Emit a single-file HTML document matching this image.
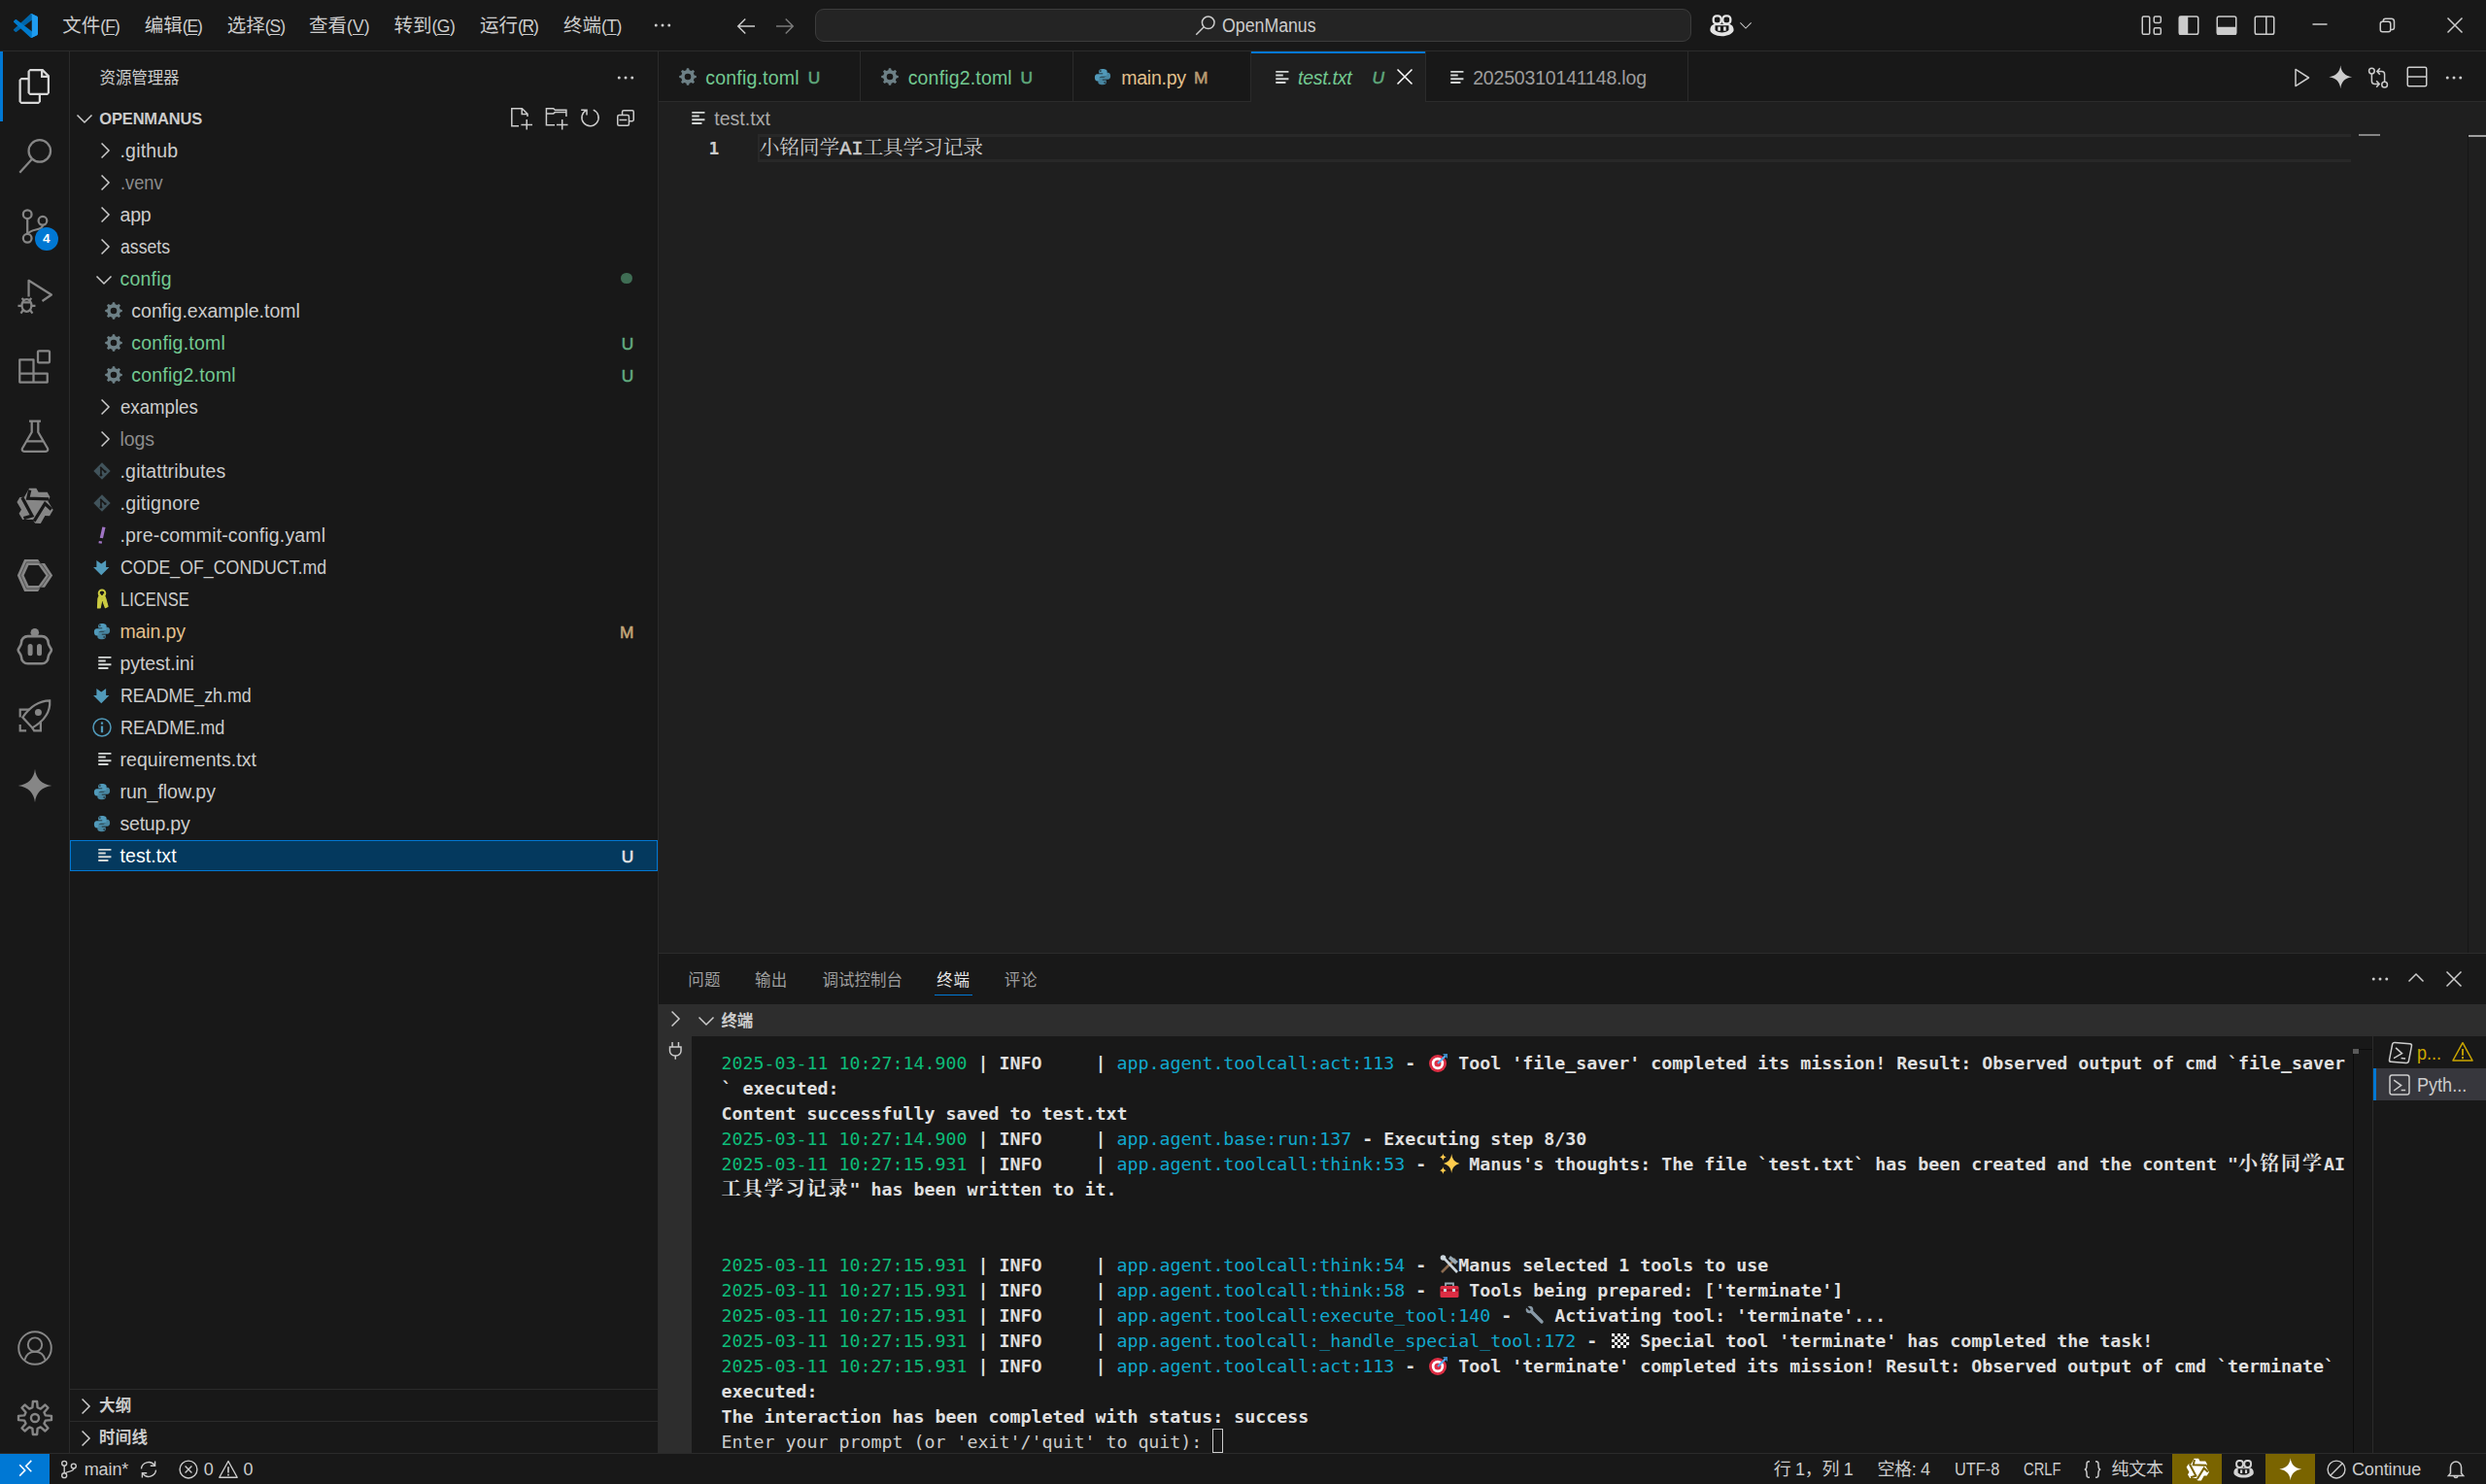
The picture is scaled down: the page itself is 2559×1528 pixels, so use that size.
<!DOCTYPE html><html lang="zh-CN"><head><meta charset="utf-8"><title>test.txt - OpenManus - Visual Studio Code</title><style>
html,body{margin:0;padding:0}
body{width:2559px;height:1528px;overflow:hidden;position:relative;background:#181818;font-family:'Liberation Sans','Noto Sans CJK SC',sans-serif;}
.a{position:absolute;display:block}
svg{overflow:visible}
.t{white-space:pre}
u{text-decoration:underline;text-underline-offset:2px;text-decoration-thickness:1px}
.term{font-family:'DejaVu Sans Mono','Noto Serif CJK SC',monospace;font-size:18.270px;line-height:26px;height:26px;white-space:pre;color:#e0e0e0;font-weight:700}
.term svg{display:inline-block}
.cj{font-size:20px;letter-spacing:2px;line-height:1px}
</style></head><body><div class="a" style="left:0px;top:52px;width:2559px;height:1px;background:#2b2b2b;"></div>
<svg class="a" style="left:13.500px;top:13.500px" width="25" height="25" viewBox="0 0 100 100"><path d="M96.461 10.796L75.857.876C73.472-.273 70.622.212 68.750 2.083L1.299 63.583c-1.815 1.654-1.813 4.511.004 6.162l5.510 5.009c1.485 1.350 3.722 1.450 5.321.237L93.361 13.370c2.725-2.067 6.639-.124 6.639 3.297v-.240c0-2.401-1.375-4.590-3.539-5.631z" fill="#0065a9"/><path d="M96.461 89.204L75.857 99.125c-2.385 1.148-5.235.663-7.107-1.208L1.299 36.417c-1.815-1.654-1.813-4.511.004-6.162l5.510-5.009c1.485-1.350 3.722-1.450 5.321-.237L93.361 86.630c2.725 2.067 6.639.124 6.639-3.297v.240c0 2.401-1.375 4.590-3.539 5.631z" fill="#007acc"/><path d="M75.858 99.126c-2.386 1.148-5.236.662-7.108-1.210C71.056 100.223 75 98.590 75 95.328V4.672c0-3.262-3.944-4.895-6.250-2.589C70.622.211 73.472-.274 75.858.874l20.601 9.907C98.623 11.822 100 14.011 100 16.413v67.174c0 2.402-1.377 4.592-3.541 5.633L75.858 99.126z" fill="#1f9cf0"/></svg>
<span class="a t" id="t2" style="top:12.50px;line-height:27px;font-size:19.5px;color:#cccccc;left:64.20px;">文件<span class="t" id="t1" style="font-size:17.500px;letter-spacing:-0.880px;">(<u>F</u>)</span></span>
<span class="a t" id="t4" style="top:12.50px;line-height:27px;font-size:19.5px;color:#cccccc;left:148.70px;">编辑<span class="t" id="t3" style="font-size:17.500px;letter-spacing:-1.122px;">(<u>E</u>)</span></span>
<span class="a t" id="t6" style="top:12.50px;line-height:27px;font-size:19.5px;color:#cccccc;left:233.70px;">选择<span class="t" id="t5" style="font-size:17.500px;letter-spacing:-0.972px;">(<u>S</u>)</span></span>
<span class="a t" id="t8" style="top:12.50px;line-height:27px;font-size:19.5px;color:#cccccc;left:318.00px;">查看<span class="t" id="t7" style="font-size:17.500px;letter-spacing:0.078px;">(<u>V</u>)</span></span>
<span class="a t" id="t10" style="top:12.50px;line-height:27px;font-size:19.5px;color:#cccccc;left:405.50px;">转到<span class="t" id="t9" style="font-size:17.500px;letter-spacing:-0.491px;">(<u>G</u>)</span></span>
<span class="a t" id="t12" style="top:12.50px;line-height:27px;font-size:19.5px;color:#cccccc;left:494.00px;">运行<span class="t" id="t11" style="font-size:17.500px;letter-spacing:-1.248px;">(<u>R</u>)</span></span>
<span class="a t" id="t14" style="top:12.50px;line-height:27px;font-size:19.5px;color:#cccccc;left:580.00px;">终端<span class="t" id="t13" style="font-size:17.500px;letter-spacing:-0.480px;">(<u>T</u>)</span></span>
<svg class="a" style="left:669.70px;top:14.00px;color:#cccccc;" width="24" height="24" viewBox="0 0 16 16" fill="none" stroke="currentColor" stroke-width="1" stroke-linecap="butt" stroke-linejoin="miter"><g fill="currentColor" stroke="none"><circle cx="3.5" cy="8" r="1"/><circle cx="8" cy="8" r="1"/><circle cx="12.5" cy="8" r="1"/></g></svg>
<svg class="a" style="left:756.30px;top:15.00px;color:#cccccc;" width="24" height="24" viewBox="0 0 16 16" fill="none" stroke="currentColor" stroke-width="1" stroke-linecap="butt" stroke-linejoin="miter"><path d="M7.5 3 L2.5 8 L7.5 13 M2.5 8 H14"/></svg>
<svg class="a" style="left:795.70px;top:15.00px;color:#7a7a7a;" width="24" height="24" viewBox="0 0 16 16" fill="none" stroke="currentColor" stroke-width="1" stroke-linecap="butt" stroke-linejoin="miter"><path d="M8.5 3 L13.5 8 L8.5 13 M13.5 8 H2"/></svg>
<div class="a" style="left:839px;top:8.5px;width:902px;height:34.5px;background:#242424;box-sizing:border-box;border:1px solid #3c3c3c;border-radius:9px;"></div>
<svg class="a" style="left:1228.50px;top:13.50px;color:#cccccc;" width="24" height="24" viewBox="0 0 16 16" fill="none" stroke="currentColor" stroke-width="1" stroke-linecap="butt" stroke-linejoin="miter"><circle cx="9.8" cy="6.2" r="4.2"/><path d="M6.8 9.2 L1.5 14.5"/></svg>
<span class="a t" id="t15" style="top:12.50px;line-height:27px;font-size:19.5px;color:#cccccc;left:1258.40px;transform:scaleX(0.9093);transform-origin:left center;">OpenManus</span>
<svg class="a" style="left:1760px;top:14px;color:#e4e4e4" width="26" height="24" viewBox="0 0 26 24"><g fill="none" stroke="currentColor" stroke-width="2.300"><rect x="3.700" y="2.300" width="8" height="8.200" rx="3.300"/><rect x="13.300" y="2.300" width="8" height="8.200" rx="3.300"/></g><path d="M.400 17C.400 13 2.500 11.500 5 10.800H20c2.500.700 4.600 2.200 4.600 6.200 0 3-5.600 6.200-12.100 6.200S.400 20 .400 17zM5.500 12.200V17c2.100 2 5 2.400 7 2.400s4.900-.400 7-2.400V12.200z" fill="currentColor" fill-rule="evenodd" stroke="none"/><rect x="8.300" y="13.500" width="2.600" height="4.200" fill="currentColor" stroke="none"/><rect x="14.100" y="13.500" width="2.600" height="4.200" fill="currentColor" stroke="none"/></svg>
<svg class="a" style="left:1787.50px;top:16.80px;color:#cccccc;stroke-width:.9" width="18" height="18" viewBox="0 0 16 16" fill="none" stroke="currentColor" stroke-width="1" stroke-linecap="butt" stroke-linejoin="miter"><path d="M3 5.7 L8 10.7 L13 5.7"/></svg>
<svg class="a" style="left:2203.00px;top:14.00px;color:#cccccc;" width="24" height="24" viewBox="0 0 16 16" fill="none" stroke="currentColor" stroke-width="1" stroke-linecap="butt" stroke-linejoin="miter"><rect x="1.500" y="2" width="5" height="12.200" rx=".900"/><rect x="9.500" y="2" width="4.700" height="4.300" rx=".900"/><rect x="9.500" y="9.900" width="4.700" height="4.300" rx=".900"/></svg>
<svg class="a" style="left:2241.00px;top:14.00px;color:#cccccc;" width="24" height="24" viewBox="0 0 16 16" fill="none" stroke="currentColor" stroke-width="1" stroke-linecap="butt" stroke-linejoin="miter"><rect x="1.500" y="2" width="13" height="12.200" rx="1.200"/><path d="M1.800 2.300h5.200v11.600H1.800z" fill="currentColor"/></svg>
<svg class="a" style="left:2280.00px;top:14.00px;color:#cccccc;" width="24" height="24" viewBox="0 0 16 16" fill="none" stroke="currentColor" stroke-width="1" stroke-linecap="butt" stroke-linejoin="miter"><rect x="1.500" y="2" width="13" height="12.200" rx="1.200"/><path d="M1.800 9.600h12.400v4.300H1.800z" fill="currentColor"/></svg>
<svg class="a" style="left:2319.00px;top:14.00px;color:#cccccc;" width="24" height="24" viewBox="0 0 16 16" fill="none" stroke="currentColor" stroke-width="1" stroke-linecap="butt" stroke-linejoin="miter"><rect x="1.500" y="2" width="13" height="12.200" rx="1.200"/><path d="M9.200 2v12.200"/></svg>
<svg class="a" style="left:2376.30px;top:13.00px;color:#cccccc;" width="24" height="24" viewBox="0 0 16 16" fill="none" stroke="currentColor" stroke-width="1" stroke-linecap="butt" stroke-linejoin="miter"><path d="M3 8H13"/></svg>
<svg class="a" style="left:2444.50px;top:14.00px;color:#cccccc;" width="24" height="24" viewBox="0 0 16 16" fill="none" stroke="currentColor" stroke-width="1" stroke-linecap="butt" stroke-linejoin="miter"><rect x="3.500" y="5.500" width="7" height="7" rx="1.500"/><path d="M5.500 5.500v-.5a1.500 1.500 0 0 1 1.500-1.500h4a2 2 0 0 1 2 2v4a1.500 1.500 0 0 1-1.500 1.500h-.8"/></svg>
<svg class="a" style="left:2514.50px;top:14.00px;color:#cccccc;" width="24" height="24" viewBox="0 0 16 16" fill="none" stroke="currentColor" stroke-width="1" stroke-linecap="butt" stroke-linejoin="miter"><path d="M3 3 L13 13 M13 3 L3 13"/></svg>
<div class="a" style="left:71px;top:53px;width:1px;height:1443px;background:#2b2b2b;"></div>
<div class="a" style="left:0px;top:53px;width:3px;height:72px;background:#0078d4;"></div>
<svg class="a" style="left:18px;top:71px;color:#d7d7d7" width="36" height="36" viewBox="0 0 24 24" fill="none" stroke="currentColor" stroke-width="1.5" stroke-linejoin="round"><path d="M17.500 0h-9L7 1.500V6H2.500L1 7.500v15.070L2.500 24h12.070L16 22.570V18h4.700l1.300-1.430V4.500L17.500 0zm0 2.120l2.380 2.380H17.500V2.120zm-3 20.380h-12v-15H7v9.070L8.500 18h6v4.500zm6-6h-12v-15H16V6h4.500v10.500z" fill="currentColor" stroke="none"/></svg>
<svg class="a" style="left:18px;top:143px;color:#868686" width="36" height="36" viewBox="0 0 24 24" fill="none" stroke="currentColor" stroke-width="1.5" stroke-linejoin="round"><circle cx="15.200" cy="8.300" r="7.500"/><path d="M10 13.800L1.500 23.200"/></svg>
<svg class="a" style="left:18px;top:215px;color:#868686" width="36" height="36" viewBox="0 0 24 24" fill="none" stroke="currentColor" stroke-width="1.5" stroke-linejoin="round"><circle cx="6.800" cy="3.800" r="2.900"/><circle cx="6.800" cy="20.200" r="2.900"/><circle cx="17.300" cy="8.200" r="2.900"/><path d="M6.800 6.700v10.600M17.300 11.100c0 4.400-8.500 2-10.300 6.400"/></svg>
<div class="a" style="left:35.700px;top:234px;width:24px;height:24px;border-radius:12px;background:#0078d4;color:#fff;font-size:13.500px;font-weight:700;line-height:24px;text-align:center">4</div>
<svg class="a" style="left:18px;top:287px;color:#868686" width="36" height="36" viewBox="0 0 24 24" fill="none" stroke="currentColor" stroke-width="1.5" stroke-linejoin="round"><path d="M7.700 12.300V1.200L23.300 11 17 15.300"/><ellipse cx="6.300" cy="18.300" rx="3.300" ry="4.300"/><path d="M3 13.300l1.600 1.600M9.600 13.300L8 14.900M.3 18.500H3M9.600 18.500h2.700M2.300 23.700l1.600-2.200M10.300 23.700l-1.600-2.200M3.300 16.300h6"/></svg>
<svg class="a" style="left:18px;top:359px;color:#868686" width="36" height="36" viewBox="0 0 24 24" fill="none" stroke="currentColor" stroke-width="1.5" stroke-linejoin="round"><path d="M1.500 7.500h9.500v9.500h9.500v6H1.500zM11 17v6M1.500 17H11"/><rect x="14" y="1.500" width="8" height="8" rx=".7"/></svg>
<svg class="a" style="left:18px;top:431px;color:#868686" width="36" height="36" viewBox="0 0 24 24" fill="none" stroke="currentColor" stroke-width="1.5" stroke-linejoin="round"><path d="M8 1.800h8M9.800 1.800v7.500L3.300 20.500c-.5 1 .2 2 1.300 2h14.800c1.100 0 1.800-1 1.300-2L14.200 9.300V1.800M6.300 15.500h11.400"/></svg>
<svg class="a" style="left:18px;top:503px;color:#868686" width="36" height="36" viewBox="0 0 36 36" fill="none"><path d="M12.09 -0.27L19.36 -0.27L21.64 3.82L30.73 3.82L33.45 8.82L31.36 12.91L36.70 21.88L33.06 28.18L28.38 28.10L23.84 35.98L18.15 35.84L15.65 31.98L5.21 32.12L1.57 25.82L3.98 21.81L-0.57 13.93L2.40 9.07L6.99 8.84Z" fill="currentColor" stroke="none"/><path d="M12.73 1.55L10.73 10.18L32.09 10.82M34.81 21.52L28.33 15.47L17.10 33.66M6.47 30.66L14.94 28.07L4.81 9.25" stroke="#181818" stroke-width="3.300" fill="none" stroke-linejoin="miter"/></svg>
<svg class="a" style="left:18px;top:575px;color:#868686" width="36" height="36" viewBox="0 0 36 36" fill="none"><path d="M-0.18 17.45L7.09 0.91L21.18 0.91L23.64 5.00L28.00 5.00L36.18 17.45L28.00 29.73L23.64 29.73L21.18 34.09L7.09 34.09ZM6.64 17.45L11.45 7.00L21.82 7.00L29.36 17.45L21.82 28.00L11.45 28.00Z" fill="currentColor" fill-rule="evenodd" stroke="none"/><path d="M3.27 17.45L9.27 3.91L21.45 3.91L24.82 6.00L32.73 17.45L24.82 28.91L21.45 31.09L9.27 31.09Z" stroke="#181818" stroke-width=".500" fill="none"/></svg>
<svg class="a" style="left:18px;top:647.7px;color:#868686" width="36" height="36" viewBox="0 0 36 36" fill="none"><circle cx="17.800" cy="3.200" r="4.300" fill="currentColor"/><path d="M10.500 7.100H25.100a6.500 6.500 0 0 1 6.500 6.500c0 3.500 3.300 5.200 3.300 7.600s-3.300 4.100-3.300 7.600a6.500 6.500 0 0 1-6.500 6.500H10.500A6.500 6.500 0 0 1 4 28.800c0-3.500-3.300-5.200-3.300-7.600S4 17.100 4 13.600A6.500 6.500 0 0 1 10.500 7.100z" stroke="currentColor" stroke-width="2.600" stroke-linejoin="round"/><path d="M13.100 17.500v7.200M22.500 17.500v7.200" stroke="currentColor" stroke-width="5" stroke-linecap="round"/></svg>
<svg class="a" style="left:18px;top:719px;color:#868686" width="36" height="36" viewBox="0 0 36 36" fill="none"><g stroke="currentColor" stroke-width="2.200" fill="none" stroke-linejoin="miter"><path d="M33.200 2.400Q16.750 2.800 5.300 19.600L15.300 30.400Q34.500 19.200 33.200 2.400z"/><path d="M12.500 11.700H2.700V19.500M23.900 23.300V33.300H17.100L15.300 30.400M2.700 26.900V33.300H9.100"/></g><circle cx="21.400" cy="14.600" r="3.500" fill="currentColor"/></svg>
<svg class="a" style="left:18px;top:791px;color:#868686" width="36" height="36" viewBox="0 0 24 24" fill="none" stroke="currentColor" stroke-width="1.5" stroke-linejoin="round"><path d="M12 .5c.6 6.500 4.500 10.400 11.500 11.500-7 1.100-10.900 5-11.500 11.500C11.400 17 7.500 13.100.5 12 7.500 10.900 11.400 7 12 .5z" fill="currentColor" stroke="none"/></svg>
<svg class="a" style="left:18px;top:1370px;color:#868686" width="36" height="36" viewBox="0 0 24 24" fill="none" stroke="currentColor" stroke-width="1.3" stroke-linejoin="round"><circle cx="12" cy="12" r="11.200"/><circle cx="12" cy="9.700" r="4.800"/><path d="M4.800 20.500c1-4 3.800-6 7.200-6s6.200 2 7.200 6"/></svg>
<svg class="a" style="left:18px;top:1442px;color:#868686" width="36" height="36" viewBox="0 0 24 24" fill="none" stroke="currentColor" stroke-width="1.5" stroke-linejoin="round"><path d="M23.31 10.57 L23.31 13.43 L19.20 13.73 L18.31 15.87 L21.01 18.99 L18.99 21.01 L15.87 18.31 L13.73 19.20 L13.43 23.31 L10.57 23.31 L10.27 19.20 L8.13 18.31 L5.01 21.01 L2.99 18.99 L5.69 15.87 L4.80 13.73 L0.69 13.43 L0.69 10.57 L4.80 10.27 L5.69 8.13 L2.99 5.01 L5.01 2.99 L8.13 5.69 L10.27 4.80 L10.57 0.69 L13.43 0.69 L13.73 4.80 L15.87 5.69 L18.99 2.99 L21.01 5.01 L18.31 8.13 L19.20 10.27Z" stroke-width="1.600"/><circle cx="12" cy="12" r="2.700" stroke-width="1.600"/></svg>
<div class="a" style="left:677px;top:53px;width:1px;height:1443px;background:#2b2b2b;"></div>
<span class="a t" id="t16" style="top:68.50px;line-height:23px;font-size:16.5px;color:#cccccc;left:102.60px;letter-spacing:-0.150px;">资源管理器</span>
<svg class="a" style="left:632.00px;top:67.50px;color:#cccccc;" width="24" height="24" viewBox="0 0 16 16" fill="none" stroke="currentColor" stroke-width="1" stroke-linecap="butt" stroke-linejoin="miter"><g fill="currentColor" stroke="none"><circle cx="3.5" cy="8" r="1"/><circle cx="8" cy="8" r="1"/><circle cx="12.5" cy="8" r="1"/></g></svg>
<svg class="a" style="left:75.20px;top:110.00px;color:#cccccc;" width="24" height="24" viewBox="0 0 16 16" fill="none" stroke="currentColor" stroke-width="1" stroke-linecap="butt" stroke-linejoin="miter"><path d="M3 5.7 L8 10.7 L13 5.7"/></svg>
<span class="a t" id="t17" style="top:110.50px;line-height:23px;font-size:16.5px;color:#cccccc;left:102.30px;font-weight:700;letter-spacing:-0.171px;">OPENMANUS</span>
<svg class="a" style="left:525.00px;top:109.90px;color:#cccccc;" width="24" height="24" viewBox="0 0 24 24" fill="none" stroke="currentColor" stroke-width="1" stroke-linecap="butt" stroke-linejoin="miter"><g stroke-width="1.500"><path d="M9 19.700H1.800V1.700H12.400L18 7.300V10.100M12.200 1.700V7.500H18M11.400 18.500H23M17.200 13V23.600"/></g></svg>
<svg class="a" style="left:560.50px;top:109.90px;color:#cccccc;" width="24" height="24" viewBox="0 0 24 24" fill="none" stroke="currentColor" stroke-width="1" stroke-linecap="butt" stroke-linejoin="miter"><g stroke-width="1.500"><path d="M10 18.800H1.400V1.800H8.700L10.300 3.300H21.900V10.100M1.400 6.900H8.700L10.300 5.600H21.900M11.900 18.500H23.500M17.700 13V23.600"/></g></svg>
<svg class="a" style="left:595.00px;top:109.90px;color:#cccccc;" width="24" height="24" viewBox="0 0 24 24" fill="none" stroke="currentColor" stroke-width="1" stroke-linecap="butt" stroke-linejoin="miter"><g stroke-width="1.500"><path d="M8.870 3.310A8.600 8.600 0 1 0 15.720 3.130M3.200 3.300H9V8.500"/></g></svg>
<svg class="a" style="left:631.50px;top:109.90px;color:#cccccc;" width="24" height="24" viewBox="0 0 24 24" fill="none" stroke="currentColor" stroke-width="1" stroke-linecap="butt" stroke-linejoin="miter"><g stroke-width="1.500"><rect x="3.750" y="8.550" width="11.700" height="10.800" rx="1.500"/><path d="M5.500 13.600H13.300M8.550 8.500V5.250a1.500 1.500 0 0 1 1.500-1.500H18.750a1.500 1.500 0 0 1 1.500 1.500V13.250a1.500 1.500 0 0 1-1.500 1.500H15.500"/></g></svg>
<svg class="a" style="left:95.70px;top:143.00px;color:#cccccc;" width="24" height="24" viewBox="0 0 16 16" fill="none" stroke="currentColor" stroke-width="1" stroke-linecap="butt" stroke-linejoin="miter"><path d="M5.7 3 L10.7 8 L5.7 13"/></svg>
<span class="a t" id="t18" style="top:141.50px;line-height:27px;font-size:19.5px;color:#cccccc;left:123.50px;letter-spacing:0.190px;">.github</span>
<svg class="a" style="left:95.70px;top:176.00px;color:#cccccc;" width="24" height="24" viewBox="0 0 16 16" fill="none" stroke="currentColor" stroke-width="1" stroke-linecap="butt" stroke-linejoin="miter"><path d="M5.7 3 L10.7 8 L5.7 13"/></svg>
<span class="a t" id="t19" style="top:174.50px;line-height:27px;font-size:19.5px;color:#8c8c8c;left:123.50px;transform:scaleX(0.9354);transform-origin:left center;">.venv</span>
<svg class="a" style="left:95.70px;top:209.00px;color:#cccccc;" width="24" height="24" viewBox="0 0 16 16" fill="none" stroke="currentColor" stroke-width="1" stroke-linecap="butt" stroke-linejoin="miter"><path d="M5.7 3 L10.7 8 L5.7 13"/></svg>
<span class="a t" id="t20" style="top:207.50px;line-height:27px;font-size:19.5px;color:#cccccc;left:123.50px;letter-spacing:-0.173px;">app</span>
<svg class="a" style="left:95.70px;top:242.00px;color:#cccccc;" width="24" height="24" viewBox="0 0 16 16" fill="none" stroke="currentColor" stroke-width="1" stroke-linecap="butt" stroke-linejoin="miter"><path d="M5.7 3 L10.7 8 L5.7 13"/></svg>
<span class="a t" id="t21" style="top:240.50px;line-height:27px;font-size:19.5px;color:#cccccc;left:123.50px;transform:scaleX(0.9067);transform-origin:left center;">assets</span>
<svg class="a" style="left:95.00px;top:275.50px;color:#cccccc;" width="24" height="24" viewBox="0 0 16 16" fill="none" stroke="currentColor" stroke-width="1" stroke-linecap="butt" stroke-linejoin="miter"><path d="M3 5.7 L8 10.7 L13 5.7"/></svg>
<span class="a t" id="t22" style="top:273.50px;line-height:27px;font-size:19.5px;color:#73c991;left:123.50px;letter-spacing:0.211px;">config</span>
<div class="a" style="left:639.3px;top:280.6px;width:11.8px;height:11.8px;background:#3f6d54;border-radius:50%;"></div>
<svg class="a" style="left:104.50px;top:307.50px;color:#6d8086;" width="24" height="24" viewBox="0 0 16 16" fill="none" stroke="currentColor" stroke-width="1" stroke-linecap="butt" stroke-linejoin="miter"><path d="M13.85 7.26 L13.85 8.74 L12.47 9.07 L11.92 10.40 L12.66 11.62 L11.62 12.66 L10.40 11.92 L9.07 12.47 L8.74 13.85 L7.26 13.85 L6.93 12.47 L5.60 11.92 L4.38 12.66 L3.34 11.62 L4.08 10.40 L3.53 9.07 L2.15 8.74 L2.15 7.26 L3.53 6.93 L4.08 5.60 L3.34 4.38 L4.38 3.34 L5.60 4.08 L6.93 3.53 L7.26 2.15 L8.74 2.15 L9.07 3.53 L10.40 4.08 L11.62 3.34 L12.66 4.38 L11.92 5.60 L12.47 6.93Z M8 5.800a2.200 2.200 0 1 0 0 4.400a2.200 2.200 0 1 0 0-4.400z" fill="currentColor" fill-rule="evenodd" stroke="none"/></svg>
<span class="a t" id="t23" style="top:306.50px;line-height:27px;font-size:19.5px;color:#cccccc;left:135.30px;letter-spacing:0.010px;">config.example.toml</span>
<svg class="a" style="left:104.50px;top:340.50px;color:#6d8086;" width="24" height="24" viewBox="0 0 16 16" fill="none" stroke="currentColor" stroke-width="1" stroke-linecap="butt" stroke-linejoin="miter"><path d="M13.85 7.26 L13.85 8.74 L12.47 9.07 L11.92 10.40 L12.66 11.62 L11.62 12.66 L10.40 11.92 L9.07 12.47 L8.74 13.85 L7.26 13.85 L6.93 12.47 L5.60 11.92 L4.38 12.66 L3.34 11.62 L4.08 10.40 L3.53 9.07 L2.15 8.74 L2.15 7.26 L3.53 6.93 L4.08 5.60 L3.34 4.38 L4.38 3.34 L5.60 4.08 L6.93 3.53 L7.26 2.15 L8.74 2.15 L9.07 3.53 L10.40 4.08 L11.62 3.34 L12.66 4.38 L11.92 5.60 L12.47 6.93Z M8 5.800a2.200 2.200 0 1 0 0 4.400a2.200 2.200 0 1 0 0-4.400z" fill="currentColor" fill-rule="evenodd" stroke="none"/></svg>
<span class="a t" id="t24" style="top:339.50px;line-height:27px;font-size:19.5px;color:#73c991;left:135.30px;letter-spacing:0.220px;">config.toml</span>
<span class="a t" id="t25" style="top:341.80px;line-height:24px;font-size:17.3px;color:#62ad80;right:1906.70px;-webkit-text-stroke:.55px currentColor;">U</span>
<svg class="a" style="left:104.50px;top:373.50px;color:#6d8086;" width="24" height="24" viewBox="0 0 16 16" fill="none" stroke="currentColor" stroke-width="1" stroke-linecap="butt" stroke-linejoin="miter"><path d="M13.85 7.26 L13.85 8.74 L12.47 9.07 L11.92 10.40 L12.66 11.62 L11.62 12.66 L10.40 11.92 L9.07 12.47 L8.74 13.85 L7.26 13.85 L6.93 12.47 L5.60 11.92 L4.38 12.66 L3.34 11.62 L4.08 10.40 L3.53 9.07 L2.15 8.74 L2.15 7.26 L3.53 6.93 L4.08 5.60 L3.34 4.38 L4.38 3.34 L5.60 4.08 L6.93 3.53 L7.26 2.15 L8.74 2.15 L9.07 3.53 L10.40 4.08 L11.62 3.34 L12.66 4.38 L11.92 5.60 L12.47 6.93Z M8 5.800a2.200 2.200 0 1 0 0 4.400a2.200 2.200 0 1 0 0-4.400z" fill="currentColor" fill-rule="evenodd" stroke="none"/></svg>
<span class="a t" id="t26" style="top:372.50px;line-height:27px;font-size:19.5px;color:#73c991;left:135.30px;letter-spacing:0.205px;">config2.toml</span>
<span class="a t" id="t27" style="top:374.80px;line-height:24px;font-size:17.3px;color:#62ad80;right:1906.70px;-webkit-text-stroke:.55px currentColor;">U</span>
<svg class="a" style="left:95.70px;top:407.00px;color:#cccccc;" width="24" height="24" viewBox="0 0 16 16" fill="none" stroke="currentColor" stroke-width="1" stroke-linecap="butt" stroke-linejoin="miter"><path d="M5.7 3 L10.7 8 L5.7 13"/></svg>
<span class="a t" id="t28" style="top:405.50px;line-height:27px;font-size:19.5px;color:#cccccc;left:123.50px;transform:scaleX(0.9560);transform-origin:left center;">examples</span>
<svg class="a" style="left:95.70px;top:440.00px;color:#cccccc;" width="24" height="24" viewBox="0 0 16 16" fill="none" stroke="currentColor" stroke-width="1" stroke-linecap="butt" stroke-linejoin="miter"><path d="M5.7 3 L10.7 8 L5.7 13"/></svg>
<span class="a t" id="t29" style="top:438.50px;line-height:27px;font-size:19.5px;color:#8c8c8c;left:123.50px;letter-spacing:-0.060px;">logs</span>
<svg class="a" style="left:92.50px;top:472.50px;color:#41535b;" width="24" height="24" viewBox="0 0 16 16" fill="none" stroke="currentColor" stroke-width="1" stroke-linecap="butt" stroke-linejoin="miter"><path d="M8 2.200L13.800 8 8 13.800 2.200 8z" fill="currentColor" stroke="none"/><path d="M6.800 5.200l3.200 3.200M7.300 5.500v5.300" stroke="#181818" stroke-width="1.100"/><circle cx="10.200" cy="8.500" r=".9" fill="#181818" stroke="none"/><circle cx="7.300" cy="10.800" r=".9" fill="#181818" stroke="none"/></svg>
<span class="a t" id="t30" style="top:471.50px;line-height:27px;font-size:19.5px;color:#cccccc;left:123.50px;letter-spacing:0.197px;">.gitattributes</span>
<svg class="a" style="left:92.50px;top:505.50px;color:#41535b;" width="24" height="24" viewBox="0 0 16 16" fill="none" stroke="currentColor" stroke-width="1" stroke-linecap="butt" stroke-linejoin="miter"><path d="M8 2.200L13.800 8 8 13.800 2.200 8z" fill="currentColor" stroke="none"/><path d="M6.800 5.200l3.200 3.200M7.300 5.500v5.300" stroke="#181818" stroke-width="1.100"/><circle cx="10.200" cy="8.500" r=".9" fill="#181818" stroke="none"/><circle cx="7.300" cy="10.800" r=".9" fill="#181818" stroke="none"/></svg>
<span class="a t" id="t31" style="top:504.50px;line-height:27px;font-size:19.5px;color:#cccccc;left:123.50px;letter-spacing:0.242px;">.gitignore</span>
<svg class="a" style="left:92.50px;top:539.00px;color:#a074c4;" width="24" height="24" viewBox="0 0 16 16" fill="none" stroke="currentColor" stroke-width="1" stroke-linecap="butt" stroke-linejoin="miter"><path d="M9.300 2.500L7.600 10M7 12.200l-.3 1.500" stroke-width="2.200"/></svg>
<span class="a t" id="t32" style="top:537.50px;line-height:27px;font-size:19.5px;color:#cccccc;left:123.50px;letter-spacing:0.162px;">.pre-commit-config.yaml</span>
<svg class="a" style="left:94.25px;top:574.25px;color:#519aba;" width="20.5" height="20.5" viewBox="0 0 16 16" fill="none" stroke="currentColor" stroke-width="1" stroke-linecap="butt" stroke-linejoin="miter"><path d="M4.200 2.300l3.800 2.700 3.800-2.700v5.500h2.600L8 14.300 1.600 7.800h2.600z" fill="currentColor" stroke="none"/></svg>
<span class="a t" id="t33" style="top:570.50px;line-height:27px;font-size:19.5px;color:#cccccc;left:123.50px;transform:scaleX(0.9109);transform-origin:left center;">CODE_OF_CONDUCT.md</span>
<svg class="a" style="left:92.50px;top:604.50px;color:#cbcb41;" width="24" height="24" viewBox="0 0 16 16" fill="none" stroke="currentColor" stroke-width="1" stroke-linecap="butt" stroke-linejoin="miter"><circle cx="8" cy="3.800" r="2.200" stroke-width="1.300"/><path d="M6.600 4.500L5.300 7.500 5 14 6.800 14 7.600 10 8 7zM9.300 4.500l1.200 3 1.500 5.500-1.700.8-1.500-4L8 7z" fill="currentColor" stroke-width=".8" stroke-linejoin="round"/></svg>
<span class="a t" id="t34" style="top:603.50px;line-height:27px;font-size:19.5px;color:#cccccc;left:123.50px;transform:scaleX(0.8484);transform-origin:left center;">LICENSE</span>
<svg class="a" style="left:94.50px;top:639.50px;color:#519aba;" width="20" height="20" viewBox="0 0 16 16" fill="none" stroke="currentColor" stroke-width="1" stroke-linecap="butt" stroke-linejoin="miter"><path d="M7.900 1.500c-2.300 0-2.900 1-2.900 2v1.700h3.200v.6H3.600c-1.300 0-2.100 1-2.100 2.800s.8 2.900 2.100 2.900H5V9.700c0-1.100.9-2 2-2h3c.9 0 1.700-.7 1.700-1.700V3.500c0-1-.9-2-3.800-2zM6.300 2.600a.6.600 0 1 1 0 1.300.6.600 0 0 1 0-1.300z" fill="currentColor" stroke="none"/><path d="M8.100 14.500c2.300 0 2.900-1 2.900-2v-1.700H7.800v-.6h4.600c1.300 0 2.100-1 2.100-2.800s-.8-2.900-2.100-2.900H11v1.800c0 1.100-.9 2-2 2H6c-.9 0-1.700.7-1.700 1.700v2.500c0 1 .9 2 3.800 2zM9.700 13.400a.6.600 0 1 1 0-1.300.6.600 0 0 1 0 1.300z" fill="currentColor" stroke="none" opacity=".85"/></svg>
<span class="a t" id="t35" style="top:636.50px;line-height:27px;font-size:19.5px;color:#e2c08d;left:123.50px;letter-spacing:-0.147px;">main.py</span>
<span class="a t" id="t36" style="top:638.80px;line-height:24px;font-size:17.3px;color:#c2a679;right:1906.70px;-webkit-text-stroke:.55px currentColor;">M</span>
<svg class="a" style="left:92.50px;top:671.00px;color:#d4d7d6;" width="24" height="24" viewBox="0 0 16 16" fill="none" stroke="currentColor" stroke-width="1" stroke-linecap="butt" stroke-linejoin="miter"><path d="M5.500 3.900h8.800M5.500 6.350h5M5.500 8.800h8.800M5.500 11.300h6.800" stroke-width="1.300"/></svg>
<span class="a t" id="t37" style="top:669.50px;line-height:27px;font-size:19.5px;color:#cccccc;left:123.50px;letter-spacing:-0.061px;">pytest.ini</span>
<svg class="a" style="left:94.25px;top:706.25px;color:#519aba;" width="20.5" height="20.5" viewBox="0 0 16 16" fill="none" stroke="currentColor" stroke-width="1" stroke-linecap="butt" stroke-linejoin="miter"><path d="M4.200 2.300l3.800 2.700 3.800-2.700v5.500h2.600L8 14.300 1.600 7.800h2.600z" fill="currentColor" stroke="none"/></svg>
<span class="a t" id="t38" style="top:702.50px;line-height:27px;font-size:19.5px;color:#cccccc;left:123.50px;transform:scaleX(0.9140);transform-origin:left center;">README_zh.md</span>
<svg class="a" style="left:92.50px;top:737.00px;color:#519aba;" width="24" height="24" viewBox="0 0 16 16" fill="none" stroke="currentColor" stroke-width="1" stroke-linecap="butt" stroke-linejoin="miter"><circle cx="8" cy="8" r="6"/><path d="M8 7v4.500M8 4.300v1.500" stroke-width="1.500"/></svg>
<span class="a t" id="t39" style="top:735.50px;line-height:27px;font-size:19.5px;color:#cccccc;left:123.50px;transform:scaleX(0.9264);transform-origin:left center;">README.md</span>
<svg class="a" style="left:92.50px;top:770.00px;color:#d4d7d6;" width="24" height="24" viewBox="0 0 16 16" fill="none" stroke="currentColor" stroke-width="1" stroke-linecap="butt" stroke-linejoin="miter"><path d="M5.500 3.900h8.800M5.500 6.350h5M5.500 8.800h8.800M5.500 11.300h6.800" stroke-width="1.300"/></svg>
<span class="a t" id="t40" style="top:768.50px;line-height:27px;font-size:19.5px;color:#cccccc;left:123.50px;letter-spacing:0.039px;">requirements.txt</span>
<svg class="a" style="left:94.50px;top:804.50px;color:#519aba;" width="20" height="20" viewBox="0 0 16 16" fill="none" stroke="currentColor" stroke-width="1" stroke-linecap="butt" stroke-linejoin="miter"><path d="M7.900 1.500c-2.300 0-2.900 1-2.900 2v1.700h3.200v.6H3.600c-1.300 0-2.100 1-2.100 2.800s.8 2.900 2.100 2.900H5V9.700c0-1.100.9-2 2-2h3c.9 0 1.700-.7 1.700-1.700V3.500c0-1-.9-2-3.800-2zM6.300 2.600a.6.600 0 1 1 0 1.300.6.600 0 0 1 0-1.300z" fill="currentColor" stroke="none"/><path d="M8.100 14.500c2.300 0 2.900-1 2.900-2v-1.700H7.800v-.6h4.600c1.300 0 2.100-1 2.100-2.800s-.8-2.900-2.100-2.900H11v1.800c0 1.100-.9 2-2 2H6c-.9 0-1.700.7-1.700 1.700v2.500c0 1 .9 2 3.800 2zM9.700 13.400a.6.600 0 1 1 0-1.300.6.600 0 0 1 0 1.300z" fill="currentColor" stroke="none" opacity=".85"/></svg>
<span class="a t" id="t41" style="top:801.50px;line-height:27px;font-size:19.5px;color:#cccccc;left:123.50px;letter-spacing:-0.026px;">run_flow.py</span>
<svg class="a" style="left:94.50px;top:837.50px;color:#519aba;" width="20" height="20" viewBox="0 0 16 16" fill="none" stroke="currentColor" stroke-width="1" stroke-linecap="butt" stroke-linejoin="miter"><path d="M7.900 1.500c-2.300 0-2.900 1-2.900 2v1.700h3.200v.6H3.600c-1.300 0-2.100 1-2.100 2.800s.8 2.900 2.100 2.900H5V9.700c0-1.100.9-2 2-2h3c.9 0 1.700-.7 1.700-1.700V3.500c0-1-.9-2-3.800-2zM6.300 2.600a.6.600 0 1 1 0 1.300.6.600 0 0 1 0-1.300z" fill="currentColor" stroke="none"/><path d="M8.100 14.500c2.300 0 2.900-1 2.900-2v-1.700H7.800v-.6h4.600c1.300 0 2.100-1 2.100-2.800s-.8-2.900-2.100-2.900H11v1.800c0 1.100-.9 2-2 2H6c-.9 0-1.700.7-1.700 1.700v2.500c0 1 .9 2 3.800 2zM9.700 13.400a.6.600 0 1 1 0-1.300.6.600 0 0 1 0 1.300z" fill="currentColor" stroke="none" opacity=".85"/></svg>
<span class="a t" id="t42" style="top:834.50px;line-height:27px;font-size:19.5px;color:#cccccc;left:123.50px;letter-spacing:-0.217px;">setup.py</span>
<div class="a" style="left:72px;top:864.5px;width:605px;height:32.5px;background:#04395e;box-sizing:border-box;border:1.500px solid #0078d4;"></div>
<svg class="a" style="left:92.50px;top:869.00px;color:#d4d7d6;" width="24" height="24" viewBox="0 0 16 16" fill="none" stroke="currentColor" stroke-width="1" stroke-linecap="butt" stroke-linejoin="miter"><path d="M5.500 3.900h8.800M5.500 6.350h5M5.500 8.800h8.800M5.500 11.300h6.800" stroke-width="1.300"/></svg>
<span class="a t" id="t43" style="top:867.50px;line-height:27px;font-size:19.5px;color:#ffffff;left:123.50px;letter-spacing:0.095px;">test.txt</span>
<span class="a t" id="t44" style="top:869.80px;line-height:24px;font-size:17.3px;color:#e6e6e6;right:1906.70px;-webkit-text-stroke:.55px currentColor;">U</span>
<div class="a" style="left:72px;top:1430px;width:605px;height:1px;background:#2b2b2b;"></div>
<div class="a" style="left:72px;top:1463px;width:605px;height:1px;background:#2b2b2b;"></div>
<svg class="a" style="left:76.00px;top:1435.50px;color:#cccccc;" width="24" height="24" viewBox="0 0 16 16" fill="none" stroke="currentColor" stroke-width="1" stroke-linecap="butt" stroke-linejoin="miter"><path d="M5.7 3 L10.7 8 L5.7 13"/></svg>
<span class="a t" id="t45" style="top:1436.00px;line-height:23px;font-size:16.5px;color:#cccccc;left:102.00px;font-weight:700;letter-spacing:0.200px;">大纲</span>
<svg class="a" style="left:76.00px;top:1468.50px;color:#cccccc;" width="24" height="24" viewBox="0 0 16 16" fill="none" stroke="currentColor" stroke-width="1" stroke-linecap="butt" stroke-linejoin="miter"><path d="M5.7 3 L10.7 8 L5.7 13"/></svg>
<span class="a t" id="t46" style="top:1469.00px;line-height:23px;font-size:16.5px;color:#cccccc;left:102.00px;font-weight:700;letter-spacing:0.250px;">时间线</span>
<div class="a" style="left:678px;top:53px;width:1881px;height:52px;background:#181818;"></div>
<div class="a" style="left:678px;top:105px;width:1881px;height:876px;background:#1f1f1f;"></div>
<div class="a" style="left:678px;top:104px;width:1881px;height:1px;background:#2b2b2b;"></div>
<div class="a" style="left:885px;top:53px;width:1px;height:51px;background:#2b2b2b;"></div>
<div class="a" style="left:1104px;top:53px;width:1px;height:51px;background:#2b2b2b;"></div>
<div class="a" style="left:1287px;top:53px;width:1px;height:51px;background:#2b2b2b;"></div>
<div class="a" style="left:1467px;top:53px;width:1px;height:51px;background:#2b2b2b;"></div>
<div class="a" style="left:1737px;top:53px;width:1px;height:51px;background:#2b2b2b;"></div>
<div class="a" style="left:1288px;top:53px;width:179px;height:52px;background:#1f1f1f;"></div>
<div class="a" style="left:1288px;top:53px;width:179px;height:1.5px;background:#0078d4;"></div>
<svg class="a" style="left:695.50px;top:66.50px;color:#6d8086;" width="24" height="24" viewBox="0 0 16 16" fill="none" stroke="currentColor" stroke-width="1" stroke-linecap="butt" stroke-linejoin="miter"><path d="M13.85 7.26 L13.85 8.74 L12.47 9.07 L11.92 10.40 L12.66 11.62 L11.62 12.66 L10.40 11.92 L9.07 12.47 L8.74 13.85 L7.26 13.85 L6.93 12.47 L5.60 11.92 L4.38 12.66 L3.34 11.62 L4.08 10.40 L3.53 9.07 L2.15 8.74 L2.15 7.26 L3.53 6.93 L4.08 5.60 L3.34 4.38 L4.38 3.34 L5.60 4.08 L6.93 3.53 L7.26 2.15 L8.74 2.15 L9.07 3.53 L10.40 4.08 L11.62 3.34 L12.66 4.38 L11.92 5.60 L12.47 6.93Z M8 5.800a2.200 2.200 0 1 0 0 4.400a2.200 2.200 0 1 0 0-4.400z" fill="currentColor" fill-rule="evenodd" stroke="none"/></svg>
<span class="a t" id="t47" style="top:66.70px;line-height:27px;font-size:19.5px;color:#73c991;left:726.30px;letter-spacing:0.190px;">config.toml</span>
<span class="a t" id="t48" style="top:68.30px;line-height:24px;font-size:17.3px;color:#5fa87c;left:831.70px;-webkit-text-stroke:.55px currentColor;">U</span>
<svg class="a" style="left:904.00px;top:66.50px;color:#6d8086;" width="24" height="24" viewBox="0 0 16 16" fill="none" stroke="currentColor" stroke-width="1" stroke-linecap="butt" stroke-linejoin="miter"><path d="M13.85 7.26 L13.85 8.74 L12.47 9.07 L11.92 10.40 L12.66 11.62 L11.62 12.66 L10.40 11.92 L9.07 12.47 L8.74 13.85 L7.26 13.85 L6.93 12.47 L5.60 11.92 L4.38 12.66 L3.34 11.62 L4.08 10.40 L3.53 9.07 L2.15 8.74 L2.15 7.26 L3.53 6.93 L4.08 5.60 L3.34 4.38 L4.38 3.34 L5.60 4.08 L6.93 3.53 L7.26 2.15 L8.74 2.15 L9.07 3.53 L10.40 4.08 L11.62 3.34 L12.66 4.38 L11.92 5.60 L12.47 6.93Z M8 5.800a2.200 2.200 0 1 0 0 4.400a2.200 2.200 0 1 0 0-4.400z" fill="currentColor" fill-rule="evenodd" stroke="none"/></svg>
<span class="a t" id="t49" style="top:66.70px;line-height:27px;font-size:19.5px;color:#73c991;left:934.70px;letter-spacing:0.169px;">config2.toml</span>
<span class="a t" id="t50" style="top:68.30px;line-height:24px;font-size:17.3px;color:#5fa87c;left:1050.50px;-webkit-text-stroke:.55px currentColor;">U</span>
<svg class="a" style="left:1125.00px;top:69.00px;color:#519aba;" width="20" height="20" viewBox="0 0 16 16" fill="none" stroke="currentColor" stroke-width="1" stroke-linecap="butt" stroke-linejoin="miter"><path d="M7.900 1.500c-2.300 0-2.900 1-2.900 2v1.700h3.200v.6H3.600c-1.300 0-2.100 1-2.100 2.800s.8 2.900 2.100 2.900H5V9.700c0-1.100.9-2 2-2h3c.9 0 1.700-.7 1.700-1.700V3.500c0-1-.9-2-3.800-2zM6.300 2.600a.6.600 0 1 1 0 1.300.6.600 0 0 1 0-1.300z" fill="currentColor" stroke="none"/><path d="M8.100 14.500c2.300 0 2.900-1 2.900-2v-1.700H7.800v-.6h4.600c1.300 0 2.100-1 2.100-2.800s-.8-2.900-2.100-2.900H11v1.800c0 1.100-.9 2-2 2H6c-.9 0-1.700.7-1.700 1.700v2.500c0 1 .9 2 3.800 2zM9.700 13.400a.6.600 0 1 1 0-1.300.6.600 0 0 1 0 1.300z" fill="currentColor" stroke="none" opacity=".85"/></svg>
<span class="a t" id="t51" style="top:66.70px;line-height:27px;font-size:19.5px;color:#e2c08d;left:1154.30px;letter-spacing:-0.264px;">main.py</span>
<span class="a t" id="t52" style="top:68.30px;line-height:24px;font-size:17.3px;color:#b89d74;left:1229.00px;-webkit-text-stroke:.55px currentColor;">M</span>
<svg class="a" style="left:1305.10px;top:67.80px;color:#d4d7d6;" width="24" height="24" viewBox="0 0 16 16" fill="none" stroke="currentColor" stroke-width="1" stroke-linecap="butt" stroke-linejoin="miter"><path d="M5.500 3.900h8.800M5.500 6.350h5M5.500 8.800h8.800M5.500 11.300h6.800" stroke-width="1.300"/></svg>
<span class="a t" id="t53" style="top:66.70px;line-height:27px;font-size:19.5px;color:#73c991;left:1336.00px;font-style:italic;letter-spacing:-0.248px;">test.txt</span>
<span class="a t" id="t54" style="top:68.30px;line-height:24px;font-size:17.3px;color:#5fa87c;left:1412.60px;font-style:italic;-webkit-text-stroke:.55px currentColor;">U</span>
<svg class="a" style="left:1434.00px;top:67.00px;color:#ffffff;" width="24" height="24" viewBox="0 0 16 16" fill="none" stroke="currentColor" stroke-width="1" stroke-linecap="butt" stroke-linejoin="miter"><path d="M3 3 L13 13 M13 3 L3 13"/></svg>
<svg class="a" style="left:1485.40px;top:67.80px;color:#d4d7d6;" width="24" height="24" viewBox="0 0 16 16" fill="none" stroke="currentColor" stroke-width="1" stroke-linecap="butt" stroke-linejoin="miter"><path d="M5.500 3.900h8.800M5.500 6.350h5M5.500 8.800h8.800M5.500 11.300h6.800" stroke-width="1.300"/></svg>
<span class="a t" id="t55" style="top:66.70px;line-height:27px;font-size:19.5px;color:#9d9d9d;left:1516.20px;letter-spacing:-0.178px;">20250310141148.log</span>
<svg class="a" style="left:2357.00px;top:67.50px;color:#cccccc;" width="24" height="24" viewBox="0 0 16 16" fill="none" stroke="currentColor" stroke-width="1" stroke-linecap="butt" stroke-linejoin="miter"><path d="M4 2.300 L13 8 L4 13.700Z" stroke-linejoin="round"/></svg>
<svg class="a" style="left:2395.75px;top:66.25px;color:#cccccc;" width="26.5" height="26.5" viewBox="0 0 16 16" fill="none" stroke="currentColor" stroke-width="1" stroke-linecap="butt" stroke-linejoin="miter"><path d="M8 .8C8.400 5 11 7.600 15.200 8 11 8.400 8.400 11 8 15.200 7.600 11 5 8.400.8 8 5 7.600 7.600 5 8 .8z" fill="currentColor" stroke="none"/></svg>
<svg class="a" style="left:2436.00px;top:68.00px;color:#cccccc;" width="24" height="24" viewBox="0 0 16 16" fill="none" stroke="currentColor" stroke-width="1" stroke-linecap="butt" stroke-linejoin="miter"><circle cx="3.600" cy="3.400" r="1.900"/><circle cx="12.400" cy="12.800" r="1.900"/><path d="M3.600 5.300v5a2 2 0 0 0 2 2h3M6.800 10.100l2 2.200-2 2.200M12.400 10.900V5.700a2 2 0 0 0-2-2H7.400M9.200 1.500l-2 2.200 2 2.200"/></svg>
<svg class="a" style="left:2475.50px;top:66.50px;color:#cccccc;" width="24" height="24" viewBox="0 0 16 16" fill="none" stroke="currentColor" stroke-width="1" stroke-linecap="butt" stroke-linejoin="miter"><rect x="1.500" y="1.500" width="13" height="13" rx="1"/><path d="M1.500 8h13"/></svg>
<svg class="a" style="left:2514.00px;top:67.50px;color:#cccccc;" width="24" height="24" viewBox="0 0 16 16" fill="none" stroke="currentColor" stroke-width="1" stroke-linecap="butt" stroke-linejoin="miter"><g fill="currentColor" stroke="none"><circle cx="3.5" cy="8" r="1"/><circle cx="8" cy="8" r="1"/><circle cx="12.5" cy="8" r="1"/></g></svg>
<svg class="a" style="left:704.30px;top:110.20px;color:#d4d7d6;" width="24" height="24" viewBox="0 0 16 16" fill="none" stroke="currentColor" stroke-width="1" stroke-linecap="butt" stroke-linejoin="miter"><path d="M5.500 3.900h8.800M5.500 6.350h5M5.500 8.800h8.800M5.500 11.300h6.800" stroke-width="1.300"/></svg>
<span class="a t" id="t56" style="top:109.00px;line-height:27px;font-size:19.5px;color:#a9a9a9;left:735.20px;letter-spacing:0.052px;">test.txt</span>
<div class="a" style="left:780px;top:138px;width:1640px;height:29px;box-sizing:border-box;border-top:3px solid #282828;border-bottom:3px solid #282828;border-left:2px solid #282828;"></div>
<span class="a t" id="t57" style="top:140.00px;line-height:25px;font-size:18px;color:#cccccc;left:729.50px;font-weight:700;font-family:'DejaVu Sans Mono','Noto Serif CJK SC',monospace;">1</span>
<span class="a t" id="t58" style="top:138.50px;line-height:29px;font-size:20.7px;color:#cccccc;left:781.80px;font-family:'Liberation Mono','Noto Serif CJK SC',monospace;letter-spacing:-0.150px;">小铭同学<span style="font-family:'Liberation Mono',monospace;-webkit-text-stroke:.45px currentColor">AI</span>工具学习记录</span>
<div class="a" style="left:2428px;top:138px;width:22px;height:2px;background:#858585;"></div>
<div class="a" style="left:2540px;top:138px;width:1px;height:843px;background:#161616;"></div>
<div class="a" style="left:2541px;top:138.5px;width:18px;height:2.5px;background:#a0a0a0;"></div>
<div class="a" style="left:678px;top:981px;width:1881px;height:1px;background:#2b2b2b;"></div>
<div class="a" style="left:678px;top:982px;width:1881px;height:514px;background:#181818;"></div>
<span class="a t" id="t59" style="top:998.30px;line-height:23px;font-size:16.5px;color:#9d9d9d;left:708.20px;letter-spacing:0.300px;">问题</span>
<span class="a t" id="t60" style="top:998.30px;line-height:23px;font-size:16.5px;color:#9d9d9d;left:777.00px;letter-spacing:0.200px;">输出</span>
<span class="a t" id="t61" style="top:998.30px;line-height:23px;font-size:16.5px;color:#9d9d9d;left:846.50px;letter-spacing:0.000px;">调试控制台</span>
<span class="a t" id="t62" style="top:998.30px;line-height:23px;font-size:16.5px;color:#e7e7e7;left:964.20px;letter-spacing:0.700px;">终端</span>
<span class="a t" id="t63" style="top:998.30px;line-height:23px;font-size:16.5px;color:#9d9d9d;left:1033.80px;letter-spacing:0.600px;">评论</span>
<div class="a" style="left:962.3px;top:1024px;width:38.3px;height:1.2px;background:#0078d4;"></div>
<svg class="a" style="left:2437.70px;top:995.80px;color:#cccccc;" width="24" height="24" viewBox="0 0 16 16" fill="none" stroke="currentColor" stroke-width="1" stroke-linecap="butt" stroke-linejoin="miter"><g fill="currentColor" stroke="none"><circle cx="3.5" cy="8" r="1"/><circle cx="8" cy="8" r="1"/><circle cx="12.5" cy="8" r="1"/></g></svg>
<svg class="a" style="left:2475.00px;top:995.00px;color:#cccccc;" width="24" height="24" viewBox="0 0 16 16" fill="none" stroke="currentColor" stroke-width="1" stroke-linecap="butt" stroke-linejoin="miter"><path d="M3 10.3 L8 5.3 L13 10.3"/></svg>
<svg class="a" style="left:2514.00px;top:996.00px;color:#cccccc;" width="24" height="24" viewBox="0 0 16 16" fill="none" stroke="currentColor" stroke-width="1" stroke-linecap="butt" stroke-linejoin="miter"><path d="M3 3 L13 13 M13 3 L3 13"/></svg>
<div class="a" style="left:678px;top:1034px;width:1881px;height:33px;background:#2d2d2d;"></div>
<div class="a" style="left:678px;top:1067px;width:33.5px;height:429px;background:#2d2d2d;"></div>
<svg class="a" style="left:683.00px;top:1036.80px;color:#cccccc;" width="24" height="24" viewBox="0 0 16 16" fill="none" stroke="currentColor" stroke-width="1" stroke-linecap="butt" stroke-linejoin="miter"><path d="M5.7 3 L10.7 8 L5.7 13"/></svg>
<svg class="a" style="left:715.00px;top:1038.50px;color:#cccccc;" width="24" height="24" viewBox="0 0 16 16" fill="none" stroke="currentColor" stroke-width="1" stroke-linecap="butt" stroke-linejoin="miter"><path d="M3 5.7 L8 10.7 L13 5.7"/></svg>
<span class="a t" id="t64" style="top:1039.50px;line-height:23px;font-size:16.5px;color:#cccccc;left:742.60px;font-weight:700;letter-spacing:-0.400px;">终端</span>
<svg class="a" style="left:684.55px;top:1071.25px;color:#cccccc;stroke-width:1.15" width="20.5" height="20.5" viewBox="0 0 16 16" fill="none" stroke="currentColor" stroke-width="1" stroke-linecap="butt" stroke-linejoin="miter"><path d="M5.500 1.500v4M10.500 1.500v4M3.500 5.500h9v3a4 4 0 0 1-4 4h-1a4 4 0 0 1-4-4zM8 12.500v3"/></svg>
<div class="a" style="left:2421.5px;top:1080px;width:1.5px;height:416px;background:#0a0a0a;"></div>
<div class="a" style="left:2422px;top:1080px;width:6px;height:5px;background:#5a5a5a;"></div>
<div class="a" style="left:2428px;top:1080px;width:14px;height:1px;background:#0c0c0c;"></div>
<div class="a" style="left:2442px;top:1067px;width:1px;height:429px;background:#2b2b2b;"></div>
<div class="a" style="left:2443px;top:1100px;width:116px;height:33px;background:#37373d;"></div>
<div class="a" style="left:2443px;top:1100px;width:2.5px;height:33px;background:#0078d4;"></div>
<svg class="a" style="left:2458.50px;top:1072.00px;color:#cccccc;" width="24" height="24" viewBox="0 0 16 16" fill="none" stroke="currentColor" stroke-width="1" stroke-linecap="butt" stroke-linejoin="miter"><g transform="translate(8 8) rotate(4) skewX(-7) translate(-8 -8)"><rect x="1.350" y="1.350" width="13.300" height="13.300" rx="1.500"/><path d="M4.100 4.800l5 3.600-5 3.600M9.100 11.700h3"/></g></svg>
<span class="a t" id="t65" style="top:1070.50px;line-height:27px;font-size:19.5px;color:#cca700;left:2488.00px;transform:scaleX(0.9222);transform-origin:left center;">p...</span>
<svg class="a" style="left:2523.00px;top:1070.50px;color:#cca700;" width="24" height="24" viewBox="0 0 16 16" fill="none" stroke="currentColor" stroke-width="1" stroke-linecap="butt" stroke-linejoin="miter"><path d="M8 1.800L14.700 14H1.300z" stroke-linejoin="round"/><path d="M8 6v4.500M8 11.400v1.400" stroke-width="1.200"/></svg>
<svg class="a" style="left:2458.00px;top:1105.00px;color:#cccccc;" width="24" height="24" viewBox="0 0 16 16" fill="none" stroke="currentColor" stroke-width="1" stroke-linecap="butt" stroke-linejoin="miter"><rect x="1.350" y="1.350" width="13.300" height="13.300" rx="1.500"/><path d="M4.100 4.800l5 3.600-5 3.600M9.100 11.700h3"/></svg>
<span class="a t" id="t66" style="top:1103.50px;line-height:27px;font-size:19.5px;color:#cccccc;left:2488.00px;transform:scaleX(0.9262);transform-origin:left center;">Pyth...</span>
<div class="a term" style="left:742.5px;top:1081.5px"><span style="color:#0dbc79;font-weight:400">2025-03-11 10:27:14.900</span> | INFO     | <span style="color:#11a8cd;font-weight:400">app.agent.toolcall:act:113</span> - <svg width="22" height="22" viewBox="0 0 22 22" style="vertical-align:-4px;margin:0 -2px 0 2px"><circle cx="10" cy="12" r="9" fill="#dd2e44"/><circle cx="10" cy="12" r="6.200" fill="#fff"/><circle cx="10" cy="12" r="3.500" fill="#dd2e44"/><path d="M10 12L19 3" stroke="#55acee" stroke-width="2.200"/><path d="M15 2l5 0 0 5z" fill="#3b88c3"/></svg> Tool 'file_saver' completed its mission! Result: Observed output of cmd `file_saver</div>
<div class="a term" style="left:742.5px;top:1107.5px">` executed:</div>
<div class="a term" style="left:742.5px;top:1133.5px">Content successfully saved to test.txt</div>
<div class="a term" style="left:742.5px;top:1159.5px"><span style="color:#0dbc79;font-weight:400">2025-03-11 10:27:14.900</span> | INFO     | <span style="color:#11a8cd;font-weight:400">app.agent.base:run:137</span> - Executing step 8/30</div>
<div class="a term" style="left:742.5px;top:1185.5px"><span style="color:#0dbc79;font-weight:400">2025-03-11 10:27:15.931</span> | INFO     | <span style="color:#11a8cd;font-weight:400">app.agent.toolcall:think:53</span> - <svg width="22" height="22" viewBox="1 1 20 20" style="vertical-align:-4px;margin:0 -2px 0 2px"><path d="M13 2c.7 5 2.500 7.500 7.500 9-5 1.500-6.800 4-7.500 9-.7-5-2.500-7.500-7.500-9 5-1.500 6.800-4 7.500-9zM5 1.500c.3 2 1 3 3 3.500-2 .5-2.700 1.500-3 3.500-.3-2-1-3-3-3.500 2-.5 2.700-1.500 3-3.500zM5 14c.3 2 1 3 3 3.500-2 .5-2.700 1.500-3 3.500-.3-2-1-3-3-3.500 2-.5 2.700-1.500 3-3.500z" fill="#ffcc4d"/></svg> Manus's thoughts: The file `test.txt` has been created and the content "<span class="cj">小铭同学</span>AI</div>
<div class="a term" style="left:742.5px;top:1211.5px"><span class="cj">工具学习记录</span>" has been written to it.</div>
<div class="a term" style="left:742.5px;top:1289.5px"><span style="color:#0dbc79;font-weight:400">2025-03-11 10:27:15.931</span> | INFO     | <span style="color:#11a8cd;font-weight:400">app.agent.toolcall:think:54</span> - <svg width="22" height="22" viewBox="0 0 22 22" style="vertical-align:-4px;margin:0 -2px 0 2px"><path d="M3 19L17 5" stroke="#8a6a4f" stroke-width="2.600"/><path d="M12 2l8 6-3 3-7-6z" fill="#99aab5"/><path d="M4 3l15 16" stroke="#ccd6dd" stroke-width="2.600"/><circle cx="4.500" cy="4" r="2.800" fill="#ccd6dd"/></svg>Manus selected 1 tools to use</div>
<div class="a term" style="left:742.5px;top:1315.5px"><span style="color:#0dbc79;font-weight:400">2025-03-11 10:27:15.931</span> | INFO     | <span style="color:#11a8cd;font-weight:400">app.agent.toolcall:think:58</span> - <svg width="22" height="22" viewBox="0 0 22 22" style="vertical-align:-4px;margin:0 -2px 0 2px"><path d="M7 7V4.500h8V7" fill="none" stroke="#99aab5" stroke-width="1.800"/><rect x="1.500" y="7" width="19" height="12" rx="1.500" fill="#dd2e44"/><rect x="1.500" y="10.500" width="19" height="2" fill="#a0041e"/><rect x="5" y="10" width="3" height="3" fill="#ccd6dd"/><rect x="14" y="10" width="3" height="3" fill="#ccd6dd"/></svg> Tools being prepared: ['terminate']</div>
<div class="a term" style="left:742.5px;top:1341.5px"><span style="color:#0dbc79;font-weight:400">2025-03-11 10:27:15.931</span> | INFO     | <span style="color:#11a8cd;font-weight:400">app.agent.toolcall:execute_tool:140</span> - <svg width="22" height="22" viewBox="0 0 22 22" style="vertical-align:-4px;margin:0 -2px 0 2px"><path d="M6 6L18 18" stroke="#8899a6" stroke-width="3.400" stroke-linecap="round"/><circle cx="5.500" cy="5.500" r="3.800" fill="#8899a6"/><path d="M2 2l4 4" stroke="#181818" stroke-width="2.200"/></svg> Activating tool: 'terminate'...</div>
<div class="a term" style="left:742.5px;top:1367.5px"><span style="color:#0dbc79;font-weight:400">2025-03-11 10:27:15.931</span> | INFO     | <span style="color:#11a8cd;font-weight:400">app.agent.toolcall:_handle_special_tool:172</span> - <svg width="22" height="22" viewBox="0 0 22 22" style="vertical-align:-4px;margin:0 -2px 0 2px"><rect x="2" y="4" width="3" height="3" fill="#fff"/><rect x="2" y="7" width="3" height="3" fill="#222"/><rect x="2" y="10" width="3" height="3" fill="#fff"/><rect x="2" y="13" width="3" height="3" fill="#222"/><rect x="2" y="16" width="3" height="3" fill="#fff"/><rect x="5" y="4" width="3" height="3" fill="#222"/><rect x="5" y="7" width="3" height="3" fill="#fff"/><rect x="5" y="10" width="3" height="3" fill="#222"/><rect x="5" y="13" width="3" height="3" fill="#fff"/><rect x="5" y="16" width="3" height="3" fill="#222"/><rect x="8" y="4" width="3" height="3" fill="#fff"/><rect x="8" y="7" width="3" height="3" fill="#222"/><rect x="8" y="10" width="3" height="3" fill="#fff"/><rect x="8" y="13" width="3" height="3" fill="#222"/><rect x="8" y="16" width="3" height="3" fill="#fff"/><rect x="11" y="4" width="3" height="3" fill="#222"/><rect x="11" y="7" width="3" height="3" fill="#fff"/><rect x="11" y="10" width="3" height="3" fill="#222"/><rect x="11" y="13" width="3" height="3" fill="#fff"/><rect x="11" y="16" width="3" height="3" fill="#222"/><rect x="14" y="4" width="3" height="3" fill="#fff"/><rect x="14" y="7" width="3" height="3" fill="#222"/><rect x="14" y="10" width="3" height="3" fill="#fff"/><rect x="14" y="13" width="3" height="3" fill="#222"/><rect x="14" y="16" width="3" height="3" fill="#fff"/><rect x="17" y="4" width="3" height="3" fill="#222"/><rect x="17" y="7" width="3" height="3" fill="#fff"/><rect x="17" y="10" width="3" height="3" fill="#222"/><rect x="17" y="13" width="3" height="3" fill="#fff"/><rect x="17" y="16" width="3" height="3" fill="#222"/></svg> Special tool 'terminate' has completed the task!</div>
<div class="a term" style="left:742.5px;top:1393.5px"><span style="color:#0dbc79;font-weight:400">2025-03-11 10:27:15.931</span> | INFO     | <span style="color:#11a8cd;font-weight:400">app.agent.toolcall:act:113</span> - <svg width="22" height="22" viewBox="0 0 22 22" style="vertical-align:-4px;margin:0 -2px 0 2px"><circle cx="10" cy="12" r="9" fill="#dd2e44"/><circle cx="10" cy="12" r="6.200" fill="#fff"/><circle cx="10" cy="12" r="3.500" fill="#dd2e44"/><path d="M10 12L19 3" stroke="#55acee" stroke-width="2.200"/><path d="M15 2l5 0 0 5z" fill="#3b88c3"/></svg> Tool 'terminate' completed its mission! Result: Observed output of cmd `terminate`</div>
<div class="a term" style="left:742.5px;top:1419.5px">executed:</div>
<div class="a term" style="left:742.5px;top:1445.5px">The interaction has been completed with status: success</div>
<div class="a term" style="left:742.5px;top:1471.5px;font-weight:400;color:#cccccc">Enter your prompt (or 'exit'/'quit' to quit): </div>
<div class="a" style="left:1248px;top:1470.5px;width:10.5px;height:25px;box-sizing:border-box;border:1.500px solid #cccccc;"></div>
<div class="a" style="left:0px;top:1496px;width:2559px;height:32px;background:#181818;"></div>
<div class="a" style="left:0px;top:1496px;width:2559px;height:1px;background:#2b2b2b;"></div>
<div class="a" style="left:0px;top:1496.5px;width:51px;height:31.5px;background:#0078d4;"></div>
<svg class="a" style="left:13.50px;top:1500.00px;color:#ffffff;" width="24" height="24" viewBox="0 0 24 24" fill="none" stroke="currentColor" stroke-width="1" stroke-linecap="butt" stroke-linejoin="miter"><path d="M6.200 8.200L11.800 13.900L6.200 19.600M18.300 3.900L12.700 9.600L18.300 15.300" stroke-width="1.500"/></svg>
<svg class="a" style="left:59.50px;top:1501.50px;color:#cccccc;" width="22" height="22" viewBox="0 0 16 16" fill="none" stroke="currentColor" stroke-width="1" stroke-linecap="butt" stroke-linejoin="miter"><circle cx="4.500" cy="3.500" r="1.800"/><circle cx="4.500" cy="12.500" r="1.800"/><circle cx="11.500" cy="5.500" r="1.800"/><path d="M4.500 5.300v5.400M11.500 7.300c0 2.700-4.500 1.700-6.500 3.700"/></svg>
<span class="a t" id="t67" style="top:1501.30px;line-height:25px;font-size:18px;color:#cccccc;left:86.70px;letter-spacing:-0.083px;">main*</span>
<svg class="a" style="left:141.50px;top:1501.50px;color:#cccccc;" width="22" height="22" viewBox="0 0 16 16" fill="none" stroke="currentColor" stroke-width="1" stroke-linecap="butt" stroke-linejoin="miter"><path d="M2.500 7.500a5.500 5.500 0 0 1 10-2.500M13.500 8.500a5.500 5.500 0 0 1-10 2.500"/><path d="M12.800 1.800v3.500H9.300M3.200 14.200v-3.500h3.500"/></svg>
<svg class="a" style="left:183.20px;top:1501.50px;color:#cccccc;" width="22" height="22" viewBox="0 0 16 16" fill="none" stroke="currentColor" stroke-width="1" stroke-linecap="butt" stroke-linejoin="miter"><circle cx="8" cy="8" r="6.500"/><path d="M5.500 5.500l5 5M10.500 5.500l-5 5"/></svg>
<span class="a t" id="t68" style="top:1501.30px;line-height:25px;font-size:18px;color:#cccccc;left:209.80px;">0</span>
<svg class="a" style="left:223.80px;top:1501.50px;color:#cccccc;" width="22" height="22" viewBox="0 0 16 16" fill="none" stroke="currentColor" stroke-width="1" stroke-linecap="butt" stroke-linejoin="miter"><path d="M8 1.800L14.700 14H1.300z" stroke-linejoin="round"/><path d="M8 6v4.500M8 11.400v1.400" stroke-width="1.200"/></svg>
<span class="a t" id="t69" style="top:1501.30px;line-height:25px;font-size:18px;color:#cccccc;left:250.60px;">0</span>
<span class="a t" id="t70" style="top:1501.30px;line-height:25px;font-size:18px;color:#cccccc;left:1825.70px;letter-spacing:-0.322px;">行 1，列 1</span>
<span class="a t" id="t71" style="top:1501.30px;line-height:25px;font-size:18px;color:#cccccc;left:1932.50px;letter-spacing:-0.404px;">空格: 4</span>
<span class="a t" id="t72" style="top:1501.30px;line-height:25px;font-size:18px;color:#cccccc;left:2012.00px;transform:scaleX(0.9078);transform-origin:left center;">UTF-8</span>
<span class="a t" id="t73" style="top:1501.30px;line-height:25px;font-size:18px;color:#cccccc;left:2083.00px;transform:scaleX(0.8189);transform-origin:left center;">CRLF</span>
<svg class="a" style="left:2142.00px;top:1500.50px;color:#cccccc;" width="24" height="24" viewBox="0 0 16 16" fill="none" stroke="currentColor" stroke-width="1" stroke-linecap="butt" stroke-linejoin="miter"><path d="M6 2.500c-2 0-2 .8-2 2.500s0 3-1.500 3C4 8 4 9.300 4 11s0 2.500 2 2.500M10 2.500c2 0 2 .8 2 2.500s0 3 1.500 3C12 8 12 9.300 12 11s0 2.500-2 2.500"/></svg>
<span class="a t" id="t74" style="top:1501.30px;line-height:25px;font-size:18px;color:#cccccc;left:2173.60px;letter-spacing:-0.350px;">纯文本</span>
<div class="a" style="left:2236px;top:1497px;width:50.7px;height:31px;background:#7a6400;"></div>
<svg class="a" style="left:2250.500px;top:1501.500px;color:#fff" width="22.500" height="22.500" viewBox="0 0 36 36" fill="none"><path d="M12.09 -0.27L19.36 -0.27L21.64 3.82L30.73 3.82L33.45 8.82L31.36 12.91L36.70 21.88L33.06 28.18L28.38 28.10L23.84 35.98L18.15 35.84L15.65 31.98L5.21 32.12L1.57 25.82L3.98 21.81L-0.57 13.93L2.40 9.07L6.99 8.84Z" fill="currentColor" stroke="none"/><path d="M12.73 1.55L10.73 10.18L32.09 10.82M34.81 21.52L28.33 15.47L17.10 33.66M6.47 30.66L14.94 28.07L4.81 9.25" stroke="#7a6400" stroke-width="3.300" fill="none" stroke-linejoin="miter"/></svg>
<svg class="a" style="left:2298.800px;top:1502.300px;color:#d4d4d4" width="22" height="20.300" viewBox="0 0 26 24"><g fill="none" stroke="currentColor" stroke-width="2.300"><rect x="3.700" y="2.300" width="8" height="8.200" rx="3.300"/><rect x="13.300" y="2.300" width="8" height="8.200" rx="3.300"/></g><path d="M.400 17C.400 13 2.500 11.500 5 10.800H20c2.500.700 4.600 2.200 4.600 6.200 0 3-5.600 6.200-12.100 6.200S.400 20 .400 17zM5.500 12.200V17c2.100 2 5 2.400 7 2.400s4.900-.400 7-2.400V12.200z" fill="currentColor" fill-rule="evenodd" stroke="none"/><rect x="8.300" y="13.500" width="2.600" height="4.200" fill="currentColor" stroke="none"/><rect x="14.100" y="13.500" width="2.600" height="4.200" fill="currentColor" stroke="none"/></svg>
<div class="a" style="left:2332.2px;top:1497px;width:50.8px;height:31px;background:#7a6400;"></div>
<svg class="a" style="left:2344.85px;top:1500.25px;color:#ffffff;" width="25.5" height="25.5" viewBox="0 0 16 16" fill="none" stroke="currentColor" stroke-width="1" stroke-linecap="butt" stroke-linejoin="miter"><path d="M8 .8C8.400 5 11 7.600 15.200 8 11 8.400 8.400 11 8 15.200 7.600 11 5 8.400.8 8 5 7.600 7.600 5 8 .8z" fill="currentColor" stroke="none"/></svg>
<svg class="a" style="left:2394.20px;top:1501.50px;color:#cccccc;" width="22" height="22" viewBox="0 0 16 16" fill="none" stroke="currentColor" stroke-width="1" stroke-linecap="butt" stroke-linejoin="miter"><circle cx="8" cy="8" r="6.500"/><path d="M12.500 3.500l-9 9"/></svg>
<span class="a t" id="t75" style="top:1501.30px;line-height:25px;font-size:18px;color:#cccccc;left:2420.90px;letter-spacing:-0.095px;">Continue</span>
<svg class="a" style="left:2515.70px;top:1500.30px;color:#cccccc;" width="24" height="24" viewBox="0 0 16 16" fill="none" stroke="currentColor" stroke-width="1" stroke-linecap="butt" stroke-linejoin="miter"><path d="M4.300 11.300V7.100a3.700 3.700 0 0 1 7.400 0v4.200l1.400 1.700H2.900zM6.700 13.300a1.350 1.350 0 0 0 2.600 0"/></svg></body></html>
